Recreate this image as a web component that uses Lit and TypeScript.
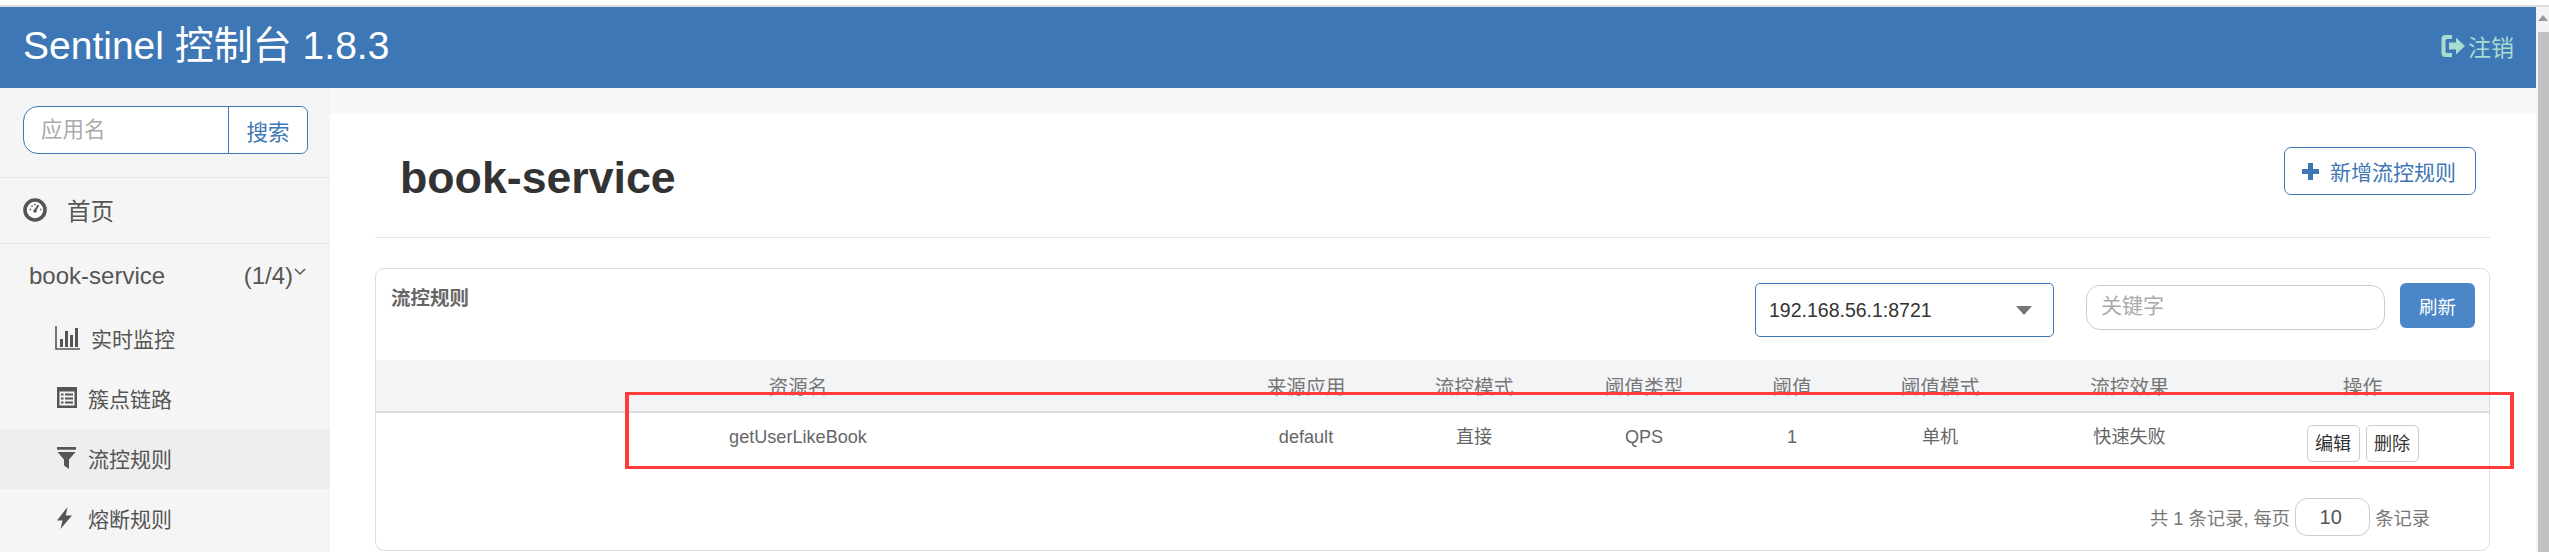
import { LitElement, html, css, svg } from "lit";
import { customElement } from "lit/decorators.js";

const icons = {
  gauge: svg`<svg class="ic" width="24" height="24" viewBox="0 0 24 24"><circle cx="12" cy="12" r="10" fill="#fff" stroke="#555" stroke-width="3.6"/><path d="M12 12.5 15.4 7.2" stroke="#555" stroke-width="2" fill="none"/><circle cx="12" cy="13" r="1.8" fill="#555"/><path d="M6.5 11.5h1.6M8.5 7.6l1 1M12 5.8v1.4M17 11.5h1.4" stroke="#555" stroke-width="1.5" fill="none"/></svg>`,
  stats: svg`<svg class="ic" width="25" height="24" viewBox="0 0 25 24"><path d="M1 0v23h24" stroke="#555" stroke-width="1.6" fill="none"/><path d="M5 13h3v8H5zM10 5h3v16h-3zM15 9h3v12h-3zM20 2h3v19h-3z" fill="#555"/></svg>`,
  list: svg`<svg class="ic" width="20" height="21" viewBox="0 0 20 21"><path fill-rule="evenodd" d="M0 0h20v21H0zM2.500 4.500v14h15v-14z" fill="#555"/><path d="M4 6.500h2.500v2H4zM8 6.500h8v2H8zM4 10.500h2.500v2H4zM8 10.500h8v2H8zM4 14.500h2.500v2H4zM8 14.500h8v2H8z" fill="#555"/></svg>`,
  filter: svg`<svg class="ic" width="19" height="22" viewBox="0 0 19 22"><path d="M0 0h19v2.800H0zM0.500 5h18l-6.500 7.500V22l-5-3.500v-6z" fill="#555"/></svg>`,
  flash: svg`<svg class="ic" width="15" height="22" viewBox="0 0 15 22"><path d="M10.500 0 0 13.500h5.500L3.500 22 15 8.500H8.800z" fill="#555"/></svg>`,
  logout: svg`<svg width="25" height="24" viewBox="0 0 25 24"><path d="M12 1H5.500Q1.500 1 1.500 5v14q0 4 4 4H12v-4H7q-1.500 0-1.500-1.500v-11Q5.500 5 7 5h5z" fill="#a8dccf"/><path d="M9 8.500h7V3.500L25 12l-9 8.500v-5H9z" fill="#a8dccf"/></svg>`,
  plus: svg`<svg width="17" height="17" viewBox="0 0 17 17"><path d="M6 0h5v6h6v5h-6v6H6v-6H0V6h6z" fill="#3e77b6"/></svg>`,
};

const subNav = [
  { label: "实时监控", icon: icons.stats, cls: "wide" },
  { label: "簇点链路", icon: icons.list, cls: "" },
  { label: "流控规则", icon: icons.filter, cls: "active" },
  { label: "熔断规则", icon: icons.flash, cls: "" },
];

const heads = ["资源名", "来源应用", "流控模式", "阈值类型", "阈值", "阈值模式", "流控效果", "操作"];
const cells = ["getUserLikeBook", "default", "直接", "QPS", "1", "单机", "快速失败"];

@customElement("app-root")
export class AppRoot extends LitElement {
  static styles = css`
    :host {
      display: block;
      position: relative;
      width: 2549px;
      height: 552px;
      overflow: hidden;
      background: #fff;
      font-family: "Liberation Sans", "Noto Sans CJK SC", sans-serif;
      color: #555;
    }
    * { box-sizing: border-box; }
    .strip { height: 7px; border-top: 5px solid #fff; background: #ddd; }
    .shell { display: flex; height: 545px; }
    .page { flex: 1; min-width: 0; }
    .scroll { width: 13px; background: #f3f3f3; padding: 8px 0 0 2px; }
    .arrow { width: 0; height: 0; margin-left: 0; border: 5px solid transparent; border-top: 0; border-bottom: 6px solid #9a9a9a; }
    .thumb { height: 520px; margin-top: 11px; background: #c1c1c1; }
    .header { height: 81px; background: #3e77b6; display: flex; align-items: center; justify-content: space-between; padding: 0 22px 5px 23px; }
    .brand { font-size: 39px; color: #fff; line-height: 1; }
    .logout { display: flex; align-items: center; gap: 3px; font-size: 23px; color: #a8dccf; margin-top: 2px; }
    .body { display: flex; height: 464px; }
    .side { width: 330px; background: #f5f5f5; flex: none; }
    .searchbar { height: 90px; padding: 18px 22px 0 23px; border-bottom: 1px solid #e6e6e6; }
    .search { display: flex; height: 48px; width: 285px; border: 1.500px solid #3e77b6; border-radius: 15px 7px 7px 15px; background: #fff; overflow: hidden; }
    .search input { width: 204px; border: 0; outline: 0; padding: 0 0 0 17px; font: 21.500px "Liberation Sans", "Noto Sans CJK SC", sans-serif; background: transparent; }
    .search input::placeholder, .kw::placeholder { color: #aaa; opacity: 1; }
    .search span { flex: 1; border-left: 1.500px solid #3e77b6; color: #3e77b6; font-size: 21.500px; display: flex; align-items: center; justify-content: center; }
    .home { height: 66px; display: flex; align-items: center; padding: 0 0 2px 23px; gap: 20px; font-size: 23.500px; border-bottom: 1px solid #e6e6e6; }
    .app { height: 65px; display: flex; align-items: center; padding: 0 24px 2px 29px; font-size: 24px; }
    .app .name { flex: 1; }
    .app svg { margin: -8px 0 0 1px; }
    .sub { height: 60px; display: flex; align-items: center; padding: 0 0 3px 57px; font-size: 21px; }
    .sub .slot { width: 31px; display: flex; }
    .sub.wide { padding-left: 55px; }
    .sub.wide .slot { width: 36px; }
    .sub.active { background: #eee; }
    .main { flex: 1; background: #f8f8f8; padding-top: 26px; min-width: 0; }
    .sheet { background: #fff; height: 438px; padding: 0 46px 0 45px; }
    .titlebar { height: 124px; border-bottom: 1px solid #e4e4e4; display: flex; justify-content: space-between; padding: 33px 14px 0 25px; }
    h1 { margin: 0; font-size: 44.700px; line-height: 62px; color: #333; font-weight: 700; }
    .add { width: 192px; height: 48px; border: 1.500px solid #3e77b6; border-radius: 7px; display: flex; align-items: center; gap: 11px; padding-left: 17px; color: #3e77b6; font-size: 21px; background: #fff; }
    .panel { margin-top: 30px; height: 283px; border: 1.500px solid #ddd; border-radius: 9px; }
    .ptop { height: 91px; display: flex; align-items: flex-start; padding: 14px 14px 0 15px; }
    .ptitle { flex: 1; font-size: 19.500px; font-weight: 700; color: #666; line-height: 30px; }
    .select { width: 299px; height: 54px; border: 1.500px solid #3e77b6; border-radius: 5px; display: flex; align-items: center; justify-content: space-between; padding: 0 21px 0 13px; color: #333; font-size: 19.500px; }
    .tri { width: 0; height: 0; border: 8px solid transparent; border-bottom: 0; border-top: 9px solid #777; }
    .kw { width: 299px; height: 45px; margin: 2px 15px 0 32px; border: 1.500px solid #ccc; border-radius: 14px; padding: 0 0 4px 14px; outline: 0; font: 21px "Liberation Sans", "Noto Sans CJK SC", sans-serif; }
    .refresh { width: 75px; height: 45px; background: #4a86c8; border-radius: 6px; color: #fff; font-size: 18.500px; display: flex; align-items: center; justify-content: center; }
    .grid { display: grid; grid-template-columns: 844px 172px 164px 176px 120px 176px 203px 1fr; text-align: center; }
    .grid > :last-child { padding-left: 5px; }
    .thead { height: 53px; background: #f3f4f6; border-bottom: 2px solid #ddd; align-items: center; font-size: 19.700px; color: #777; }
    .tbody { height: 57px; font-size: 18.100px; color: #666; padding-top: 11px; line-height: 26px; }
    .ops { display: flex; justify-content: center; gap: 6px; margin-top: 1px; }
    .ops span { width: 53px; height: 37px; border: 1px solid #ccc; border-radius: 5px; color: #333; display: flex; align-items: center; justify-content: center; }
    .pager { display: flex; justify-content: flex-end; align-items: center; gap: 5px; padding: 28px 59px 0 0; font-size: 18.300px; color: #777; }
    .size { width: 75px; height: 38px; border: 1px solid #ccc; border-radius: 12px; display: flex; align-items: center; justify-content: center; color: #555; font-size: 20px; padding-right: 4px; }
    .mark { position: absolute; left: 625px; top: 392px; width: 1889px; height: 77px; border: 3px solid #ff3b3b; border-left-width: 4px; border-right-width: 4px; }
  `;

  render() {
    return html`
      <div class="strip"></div>
      <div class="shell">
        <div class="page">
          <div class="header">
            <div class="brand">Sentinel 控制台 1.8.3</div>
            <div class="logout">${icons.logout}<span>注销</span></div>
          </div>
          <div class="body">
            <div class="side">
              <div class="searchbar">
                <div class="search"><input placeholder="应用名" /><span>搜索</span></div>
              </div>
              <div class="home">${icons.gauge}<span>首页</span></div>
              <div class="app">
                <span class="name">book-service</span><span>(1/4)</span>
                <svg width="12" height="8" viewBox="0 0 12 8"><path d="M1 1l5 5 5-5" stroke="#555" stroke-width="1.500" fill="none"/></svg>
              </div>
              ${subNav.map(
                (n) => html`<div class="sub ${n.cls}"><span class="slot">${n.icon}</span><span>${n.label}</span></div>`
              )}
            </div>
            <div class="main">
              <div class="sheet">
                <div class="titlebar">
                  <h1>book-service</h1>
                  <div class="add">${icons.plus}<span>新增流控规则</span></div>
                </div>
                <div class="panel">
                  <div class="ptop">
                    <div class="ptitle">流控规则</div>
                    <div class="select"><span>192.168.56.1:8721</span><i class="tri"></i></div>
                    <input class="kw" placeholder="关键字" />
                    <div class="refresh">刷新</div>
                  </div>
                  <div class="grid thead">${heads.map((h) => html`<div>${h}</div>`)}</div>
                  <div class="grid tbody">
                    ${cells.map((c) => html`<div>${c}</div>`)}
                    <div class="ops"><span>编辑</span><span>删除</span></div>
                  </div>
                  <div class="pager">
                    <span>共 1 条记录, 每页</span><div class="size">10</div><span>条记录</span>
                  </div>
                </div>
              </div>
            </div>
          </div>
        </div>
        <div class="scroll"><div class="arrow"></div><div class="thumb"></div></div>
      </div>
      <div class="mark"></div>
    `;
  }
}
